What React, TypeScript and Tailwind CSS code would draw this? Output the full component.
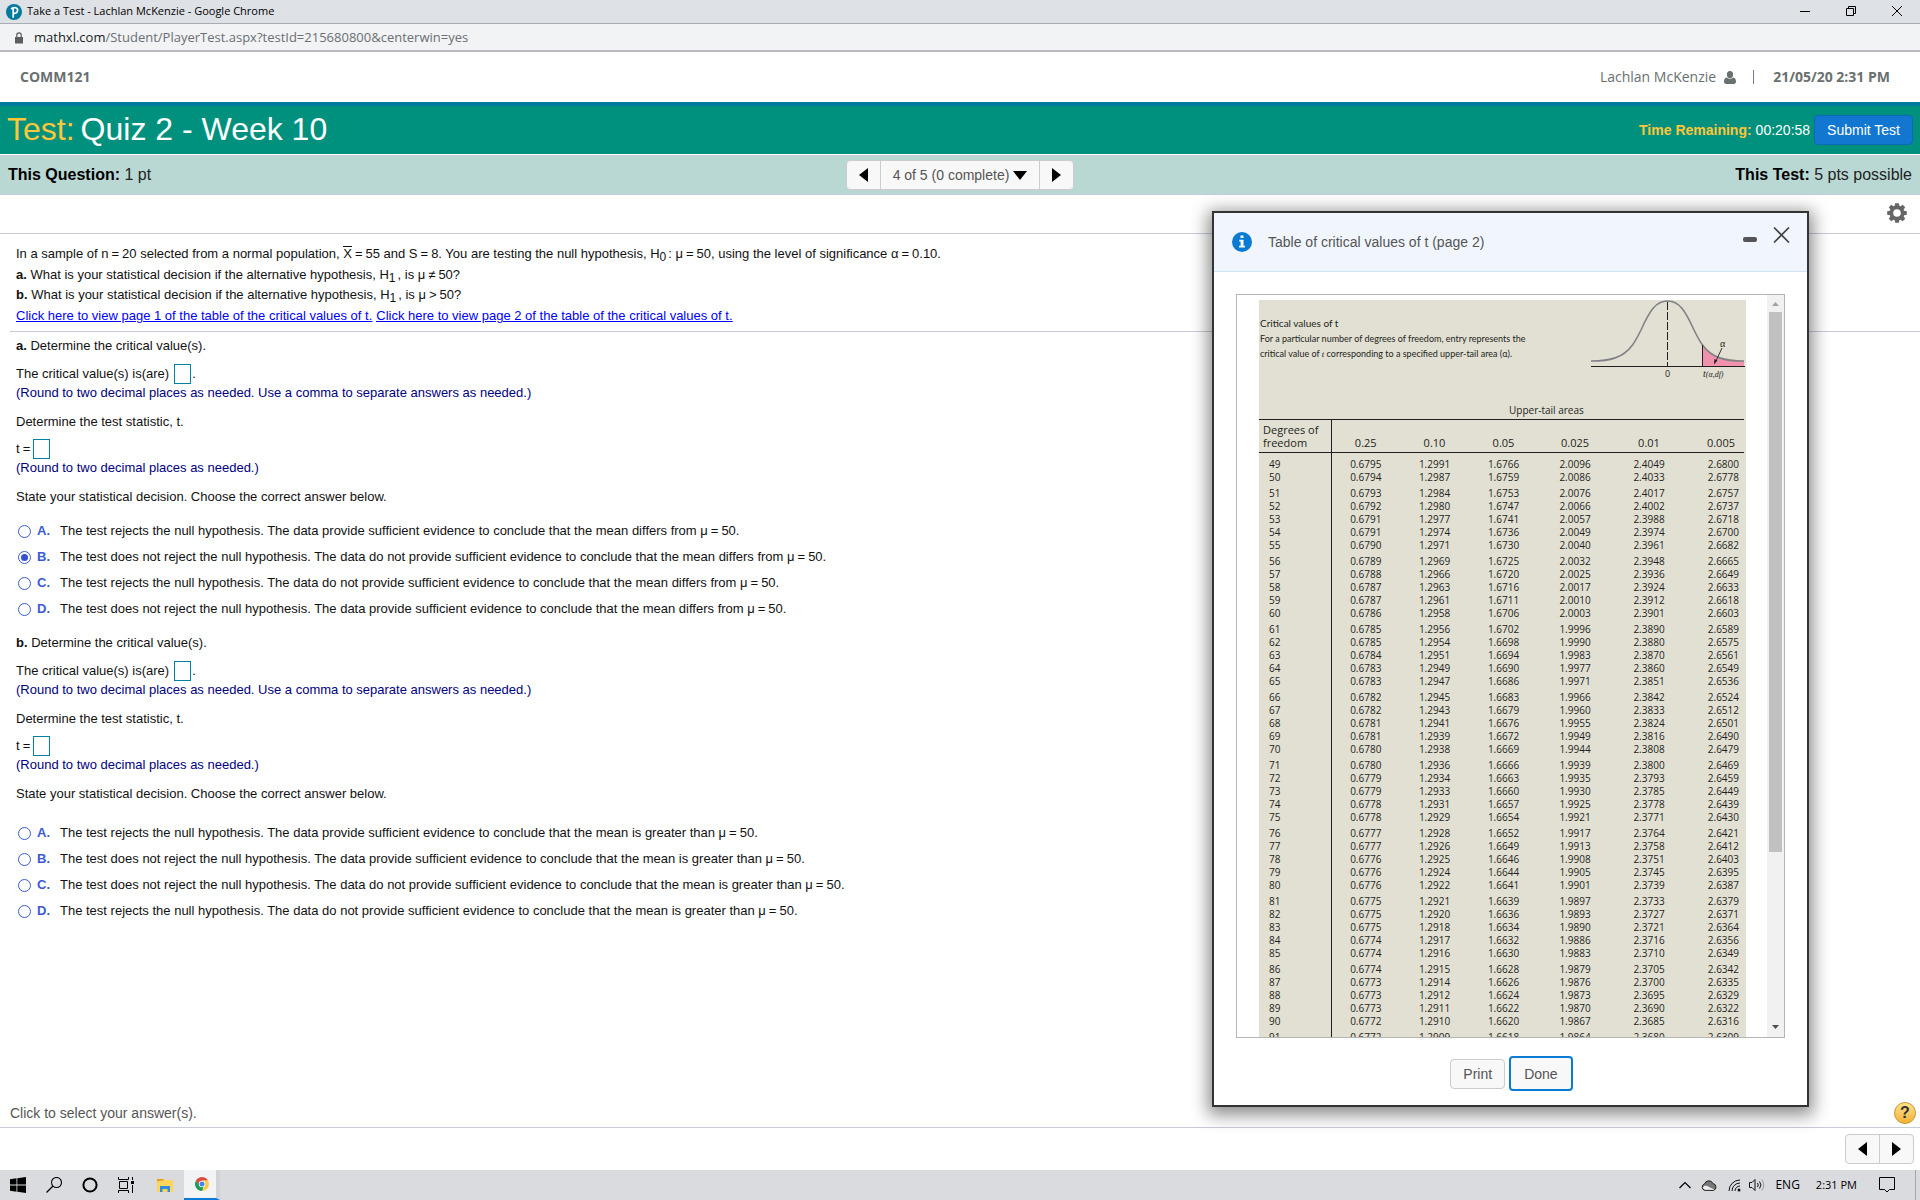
import React, { useState } from "react";

const CRITICAL_VALUES: string[][] = `
49 0.6795 1.2991 1.6766 2.0096 2.4049 2.6800
50 0.6794 1.2987 1.6759 2.0086 2.4033 2.6778
51 0.6793 1.2984 1.6753 2.0076 2.4017 2.6757
52 0.6792 1.2980 1.6747 2.0066 2.4002 2.6737
53 0.6791 1.2977 1.6741 2.0057 2.3988 2.6718
54 0.6791 1.2974 1.6736 2.0049 2.3974 2.6700
55 0.6790 1.2971 1.6730 2.0040 2.3961 2.6682
56 0.6789 1.2969 1.6725 2.0032 2.3948 2.6665
57 0.6788 1.2966 1.6720 2.0025 2.3936 2.6649
58 0.6787 1.2963 1.6716 2.0017 2.3924 2.6633
59 0.6787 1.2961 1.6711 2.0010 2.3912 2.6618
60 0.6786 1.2958 1.6706 2.0003 2.3901 2.6603
61 0.6785 1.2956 1.6702 1.9996 2.3890 2.6589
62 0.6785 1.2954 1.6698 1.9990 2.3880 2.6575
63 0.6784 1.2951 1.6694 1.9983 2.3870 2.6561
64 0.6783 1.2949 1.6690 1.9977 2.3860 2.6549
65 0.6783 1.2947 1.6686 1.9971 2.3851 2.6536
66 0.6782 1.2945 1.6683 1.9966 2.3842 2.6524
67 0.6782 1.2943 1.6679 1.9960 2.3833 2.6512
68 0.6781 1.2941 1.6676 1.9955 2.3824 2.6501
69 0.6781 1.2939 1.6672 1.9949 2.3816 2.6490
70 0.6780 1.2938 1.6669 1.9944 2.3808 2.6479
71 0.6780 1.2936 1.6666 1.9939 2.3800 2.6469
72 0.6779 1.2934 1.6663 1.9935 2.3793 2.6459
73 0.6779 1.2933 1.6660 1.9930 2.3785 2.6449
74 0.6778 1.2931 1.6657 1.9925 2.3778 2.6439
75 0.6778 1.2929 1.6654 1.9921 2.3771 2.6430
76 0.6777 1.2928 1.6652 1.9917 2.3764 2.6421
77 0.6777 1.2926 1.6649 1.9913 2.3758 2.6412
78 0.6776 1.2925 1.6646 1.9908 2.3751 2.6403
79 0.6776 1.2924 1.6644 1.9905 2.3745 2.6395
80 0.6776 1.2922 1.6641 1.9901 2.3739 2.6387
81 0.6775 1.2921 1.6639 1.9897 2.3733 2.6379
82 0.6775 1.2920 1.6636 1.9893 2.3727 2.6371
83 0.6775 1.2918 1.6634 1.9890 2.3721 2.6364
84 0.6774 1.2917 1.6632 1.9886 2.3716 2.6356
85 0.6774 1.2916 1.6630 1.9883 2.3710 2.6349
86 0.6774 1.2915 1.6628 1.9879 2.3705 2.6342
87 0.6773 1.2914 1.6626 1.9876 2.3700 2.6335
88 0.6773 1.2912 1.6624 1.9873 2.3695 2.6329
89 0.6773 1.2911 1.6622 1.9870 2.3690 2.6322
90 0.6772 1.2910 1.6620 1.9867 2.3685 2.6316
91 0.6772 1.2909 1.6618 1.9864 2.3680 2.6309`
  .trim()
  .split("\n")
  .map((line) => line.split(" "));

const UPPER_TAIL = ["0.25", "0.10", "0.05", "0.025", "0.01", "0.005"];

function Eq({ sign = "=" }: { sign?: string }) {
  return <span className="mx-[3px]">{sign}</span>;
}

function Sub({ children }: { children: React.ReactNode }) {
  return <sub className="mr-0.5 text-xs leading-none">{children}</sub>;
}

function Triangle({ dir }: { dir: "left" | "right" | "down" }) {
  const points = { left: "9,0 9,14 0,7", right: "0,0 0,14 9,7", down: "0,3 14,3 7,12" }[dir];
  return (
    <svg className={dir === "down" ? "h-3.5 w-3.5" : "h-3.5 w-[9px]"} aria-hidden="true">
      <polygon points={points} fill="#000" />
    </svg>
  );
}

function WindowChrome() {
  return (
    <>
      <div className="flex h-6 items-center justify-between border-b border-[#a9acb0] bg-[#dee1e6] pl-1.5 font-['Open_Sans',sans-serif] text-[11px] text-black">
        <div className="flex items-center gap-[5px]">
          <svg viewBox="0 0 16 16" className="h-4 w-4" aria-hidden="true">
            <circle cx="8" cy="8" r="8" fill="#047a9c" />
            <path d="M5.6 4.6C8 2.6 12 3.6 11.6 6.6 11.3 9 9 9.8 7.4 9.2M7.2 5.4v7.6" fill="none" stroke="#fff" strokeWidth="1.7" strokeLinecap="round" />
          </svg>
          <span>Take a Test - Lachlan McKenzie - Google Chrome</span>
        </div>
        <div className="flex pb-0.5">
          <button aria-label="Minimize" className="flex h-5 w-[46px] items-center justify-center">
            <svg className="h-3 w-3"><path d="M1 6.5h10" stroke="#000" /></svg>
          </button>
          <button aria-label="Restore" className="flex h-5 w-[46px] items-center justify-center">
            <svg className="h-3 w-3"><path d="M1.5 3.5h7v7h-7zM3.5 3.5v-2h7v7h-2" fill="none" stroke="#000" /></svg>
          </button>
          <button aria-label="Close" className="flex h-5 w-[46px] items-center justify-center">
            <svg className="h-3 w-3"><path d="M1 1l10 10M11 1L1 11" stroke="#000" /></svg>
          </button>
        </div>
      </div>
      <div className="flex h-7 items-center gap-2.5 border-b-2 border-[#b8babd] bg-[#f1f3f4] pt-px pl-3.5 font-['Open_Sans',sans-serif] text-[13px] text-[#6b6f74]">
        <svg viewBox="0 0 10 12" className="h-3 w-2.5" aria-label="Secure">
          <path d="M1 5h8v6.5H1z" fill="#5a5d61" />
          <path d="M2.8 5V3a2.2 2.2 0 0 1 4.4 0v2" fill="none" stroke="#5a5d61" strokeWidth="1.2" />
        </svg>
        <span>
          <span className="text-[#202124]">mathxl.com</span>/Student/PlayerTest.aspx?testId=215680800&amp;centerwin=yes
        </span>
      </div>
    </>
  );
}

function CourseHeader() {
  return (
    <header>
      <div className="flex h-[50px] items-center justify-between px-5 font-['Open_Sans',sans-serif] text-sm text-[#6a7070]">
        <span className="font-bold">COMM121</span>
        <div className="mr-2.5 flex items-center">
          <span>Lachlan McKenzie</span>
          <svg viewBox="0 0 12 13" className="ml-2 h-[13px] w-3" aria-hidden="true">
            <ellipse cx="6" cy="3.6" rx="3.1" ry="3.6" fill="#6a7070" />
            <path d="M0 10.5C0 7.8 1.4 6.6 2.8 6.4 4.4 8.2 7.6 8.2 9.2 6.4 10.6 6.6 12 7.8 12 10.5 12 12 11.2 13 9.8 13H2.2C.8 13 0 12 0 10.5z" fill="#6a7070" />
          </svg>
          <span className="ml-[17px] h-3.5 w-px bg-[#7a7896]" />
          <span className="ml-[19px] font-bold">21/05/20 2:31 PM</span>
        </div>
      </div>
      <div className="flex h-[52px] items-center justify-between border-t-4 border-[#007a9c] bg-[#00917e] pr-[7px] pl-[7px] text-white">
        <h1 className="flex gap-1.5 pb-0.5 text-[32px] leading-none">
          <span className="text-[#ffc639]">Test:</span>
          <span>Quiz 2 - Week 10</span>
        </h1>
        <div className="flex items-center text-sm">
          <span className="mr-1 font-bold text-[#ffc639]">Time Remaining:</span>
          <span className="mr-1">00:20:58</span>
          <button className="h-[30px] rounded-sm border border-[#0e68b8] bg-[#1177d1] px-3">Submit Test</button>
        </div>
      </div>
      <div className="mt-px grid h-10 grid-cols-3 items-center border-y border-[#c8ccda] bg-[#bad8d3] px-2 text-base text-[#222]">
        <div>
          <b className="text-black">This Question:</b> 1 pt
        </div>
        <div className="flex h-[30px] items-stretch justify-self-center rounded-sm border border-[#ccc] bg-[#f8f8f8] text-sm text-[#555]">
          <button aria-label="Previous question" className="flex w-[33px] items-center justify-center"><Triangle dir="left" /></button>
          <button className="flex items-center gap-1 border-x border-[#ccc] px-3">4 of 5 (0 complete) <Triangle dir="down" /></button>
          <button aria-label="Next question" className="flex w-[33px] items-center justify-center"><Triangle dir="right" /></button>
        </div>
        <div className="justify-self-end">
          <b className="text-black">This Test:</b> 5 pts possible
        </div>
      </div>
      <div className="flex h-[39px] items-center justify-end border-b border-[#c8ccda] pr-[13px] pb-0.5">
        <button aria-label="Settings">
          <svg viewBox="-10 -10 20 20" className="h-5 w-5" aria-hidden="true">
            {[0, 45, 90, 135, 180, 225, 270, 315].map((a) => (
              <path key={a} d="M-2.6-6L-1.8-9.8H1.8L2.6-6z" fill="#666" transform={`rotate(${a})`} />
            ))}
            <circle r="5.6" fill="none" stroke="#666" strokeWidth="3.6" />
          </svg>
        </button>
      </div>
    </header>
  );
}

function AnswerBox({ label }: { label: string }) {
  return <input aria-label={label} className="h-5 w-[17px] border border-[#0082a0] bg-white text-center outline-none" />;
}

function Part({ id, intro, lead, choices, initial, gap }: {
  id: string;
  intro: string;
  lead: string;
  choices: string[];
  initial: string;
  gap: string;
}) {
  const [picked, setPicked] = useState(initial);
  return (
    <section className="flex flex-col">
      <p className="leading-5"><b>{id}.</b> {intro}</p>
      <p className="mt-2 flex h-5 items-center">
        <span className="mr-[5px]">The critical value(s) is(are)</span>
        <AnswerBox label={`Critical values, part ${id}`} />
        <span className="ml-px">.</span>
      </p>
      <p className="leading-[18px] text-[#000080]">(Round to two decimal places as needed. Use a comma to separate answers as needed.)</p>
      <p className="mt-2.5 leading-5">Determine the test statistic, t.</p>
      <p className="mt-[7px] flex h-5 items-center">
        <span>t<Eq /></span>
        <AnswerBox label={`Test statistic, part ${id}`} />
      </p>
      <p className="leading-[18px] text-[#000080]">(Round to two decimal places as needed.)</p>
      <p className="mt-2.5 leading-5">State your statistical decision. Choose the correct answer below.</p>
      <div className={gap}>
        {choices.map((text, i) => {
          const letter = "ABCD"[i];
          return (
            <label key={letter} className="flex h-[26px] items-center">
              <input
                type="radio"
                name={`part-${id}`}
                checked={picked === letter}
                onChange={() => setPicked(letter)}
                className="ml-0.5 grid h-[13px] w-[13px] appearance-none place-items-center rounded-full border border-[#3b5bd0] bg-white before:h-[7px] before:w-[7px] before:rounded-full checked:before:bg-[#3450cf]"
              />
              <span className="ml-1.5 w-[23px] font-bold text-[#3b5bd6]">{letter}.</span>
              <span>The test {text} {lead} μ<Eq />50.</span>
            </label>
          );
        })}
      </div>
    </section>
  );
}

function Question() {
  return (
    <main className="flex-1 text-[13px] text-[#111]">
      <div className="px-4 pt-[9px] leading-[21px]">
        <p className="h-[21px]">
          In a sample of n<Eq />20 selected from a normal population,{" "}
          <span className="inline-block border-t border-[#111] leading-[13px]">X</span><Eq />55 and S<Eq />8. You are testing the null hypothesis,
          H<Sub>0</Sub>: μ<Eq />50, using the level of significance α<Eq />0.10.
        </p>
        <p className="h-5"><b>a.</b> What is your statistical decision if the alternative hypothesis, H<Sub>1</Sub>, is μ<Eq sign="≠" />50?</p>
        <p className="h-[21px]"><b>b.</b> What is your statistical decision if the alternative hypothesis, H<Sub>1</Sub>, is μ<Eq sign=">" />50?</p>
        <p className="h-[21px] text-[#0000ff] underline">
          <a href="#table-1">Click here to view page 1 of the table of the critical values of t.</a>
          <span className="inline-block w-1" />
          <a href="#table-2">Click here to view page 2 of the table of the critical values of t.</a>
        </p>
      </div>
      <hr className="mt-[5px] ml-2.5 border-[#c8ccda]" />
      <div className="flex flex-col gap-[11px] px-4 pt-1">
        <Part
          id="a"
          intro="Determine the critical value(s)."
          lead="sufficient evidence to conclude that the mean differs from"
          initial="B"
          gap="mt-[11px]"
          choices={[
            "rejects the null hypothesis. The data provide",
            "does not reject the null hypothesis. The data do not provide",
            "rejects the null hypothesis. The data do not provide",
            "does not reject the null hypothesis. The data provide",
          ]}
        />
        <Part
          id="b"
          intro="Determine the critical value(s)."
          lead="sufficient evidence to conclude that the mean is greater than"
          initial=""
          gap="mt-4"
          choices={[
            "rejects the null hypothesis. The data provide",
            "does not reject the null hypothesis. The data provide",
            "does not reject the null hypothesis. The data do not provide",
            "rejects the null hypothesis. The data do not provide",
          ]}
        />
      </div>
    </main>
  );
}

function BellCurve() {
  return (
    <svg viewBox="0 0 154 82" className="mr-px h-[82px] w-[154px]" fontFamily="Open Sans, sans-serif" fill="#231f20">
      <path d="M111.5 45C121 58 134 61 153 61V66H111.5z" fill="#f092ae" />
      <path d="M0 61C19 61 32 58 41.5 45 44.5 41 47 36 50 30 59 10 65 1 76.500 1S94 10 103 30C106 36 108.500 41 111.500 45 121 58 134 61 153 61" fill="none" stroke="#808285" strokeWidth="1.6" />
      <path d="M0 66.500h154M111.500 45v21" stroke="#231f20" />
      <path d="M76.500 2v64" stroke="#231f20" strokeDasharray="8 2" />
      <path d="M131 48l-6.500 14" stroke="#231f20" strokeWidth="0.9" />
      <path d="M123 64.500l.4-5.500 3 1.400z" />
      <text x="129" y="47" fontSize="10" fontFamily="Liberation Serif, serif">α</text>
      <text x="74" y="77" fontSize="9">0</text>
      <text x="112" y="77" fontSize="10" fontFamily="Liberation Serif, serif" fontStyle="italic">t<tspan fontSize="8">(α,df)</tspan></text>
    </svg>
  );
}

function CriticalValuesTable() {
  return (
    <table className="w-[485px] table-fixed border-collapse text-[10px] leading-[13px]">
      <colgroup>
        <col className="w-[72px]" />
        <col className="w-[69px]" />
        <col className="w-[69px]" />
        <col className="w-[69px]" />
        <col className="w-[74px]" />
        <col className="w-[74px]" />
        <col className="w-[58px]" />
      </colgroup>
      <thead>
        <tr className="h-[33px] border-y border-[#231f20] align-bottom text-[11px]">
          <th scope="col" className="border-r border-[#231f20] pb-[3px] pl-1 text-left font-normal">Degrees of<br />freedom</th>
          {UPPER_TAIL.map((h, i) => (
            <th key={h} scope="col" className={i === 5 ? "pr-[9px] pb-[3px] text-right font-normal" : "pb-[3px] font-normal"}>{h}</th>
          ))}
        </tr>
      </thead>
      <tbody>
        {CRITICAL_VALUES.map((row, r) => {
          const first = r === 0;
          const gap = r > 0 && Number(row[0]) % 5 === 1;
          const pad = first ? "pt-[5px]" : gap ? "pt-[3px]" : "pt-0";
          return (
            <tr key={row[0]}>
              <th scope="row" className={`border-r border-[#231f20] pl-2.5 text-left font-normal ${pad}`}>{row[0]}</th>
              {row.slice(1).map((v, i) => (
                <td key={i} className={`${i === 5 ? "pr-[5px] text-right" : "text-center"} ${pad}`}>{v}</td>
              ))}
            </tr>
          );
        })}
      </tbody>
    </table>
  );
}

function TableDialog() {
  return (
    <div role="dialog" aria-label="Table of critical values of t (page 2)" className="absolute top-[211px] right-[111px] bottom-[93px] flex w-[597px] flex-col border-2 border-[#333] bg-white shadow-[0_4px_16px_4px_rgba(0,0,0,0.45)]">
      <div className="flex h-[59px] items-center border-b border-[#cde3f7] bg-[#f1f6fe] pl-[18px] text-sm text-[#555]">
        <svg viewBox="0 0 20 20" className="mr-4 h-5 w-5" aria-hidden="true">
          <circle cx="10" cy="10" r="10" fill="#0a7bd4" />
          <path d="M8.500 3.500h3v2.600h-3zM7.300 7.800h4.200v5.900h1.400v1.800H7.100v-1.800h1.500V9.600H7.300z" fill="#fff" />
        </svg>
        <span>Table of critical values of t (page 2)</span>
        <div className="mr-[17px] mb-3.5 ml-auto flex items-end gap-4">
          <button aria-label="Minimize dialog" className="mb-px h-[5px] w-3.5 rounded-xs bg-[#555]" />
          <button aria-label="Close dialog">
            <svg viewBox="0 0 17 16" className="h-4 w-[17px]"><path d="M1 .5l15 15M16 .5l-15 15" stroke="#444" strokeWidth="1.7" /></svg>
          </button>
        </div>
      </div>
      <div className="mx-[22px] mt-[22px] flex min-h-0 flex-1 overflow-hidden border border-[#b5b5b5]">
        <div className="mt-[5px] ml-[22px] w-[487px] self-start bg-[#e2dfd3] font-['Open_Sans',sans-serif] text-[#231f20]">
          <div className="flex justify-between">
            <div className="pt-[15px] pl-px font-['Lato',sans-serif] text-[9px] leading-[15px]">
              <p className="text-[10px] leading-4">Critical values of t</p>
              <p>For a particular number of degrees of freedom, entry represents the</p>
              <p>critical value of <i className="font-['Liberation_Serif',serif]">t</i> corresponding to a specified upper-tail area (α).</p>
            </div>
            <BellCurve />
          </div>
          <p className="mt-[21px] mb-px pl-[250px] text-[10px] leading-[15px]">Upper-tail areas</p>
          <CriticalValuesTable />
        </div>
        <div className="ml-auto flex w-[17px] flex-col items-center justify-between bg-[#f1f1f1]" aria-hidden="true">
          <svg className="h-[17px] w-[17px] shrink-0"><path d="M5 11h7L8.500 7z" fill="#a3a3a3" /></svg>
          <div className="h-[540px] w-[13px] bg-[#c1c1c1]" />
          <div className="min-h-0 flex-1" />
          <svg className="h-[17px] w-[17px] shrink-0"><path d="M5 5h7l-3.500 4z" fill="#505050" /></svg>
        </div>
      </div>
      <div className="mt-[18px] mb-[14px] flex items-center justify-center gap-1 pl-0.5 text-sm text-[#555]">
        <button className="h-[30px] rounded-sm border border-[#ccc] bg-[#f8f8f8] px-3">Print</button>
        <button className="h-[35px] rounded border-2 border-[#0a7bd4] bg-[#f8f8f8] px-[13px]">Done</button>
      </div>
    </div>
  );
}

function Footer() {
  return (
    <footer>
      <div className="flex h-[29px] items-center justify-between border-b border-[#c8ccda] pr-1 pl-2.5 text-sm text-[#555]">
        <span>Click to select your answer(s).</span>
        <button aria-label="Help" className="h-[22px] w-[22px] rounded-full border border-[#c9962f] bg-linear-to-b from-[#fde28a] to-[#f3b233] text-base leading-none font-bold text-[#333]">?</button>
      </div>
      <div className="flex h-[42px] items-center justify-end pr-1.5">
        <div className="flex h-[30px] rounded-sm border border-[#ccc] bg-[#f8f8f8]">
          <button aria-label="Previous question" className="flex w-[34px] items-center justify-center border-r border-[#ccc]"><Triangle dir="left" /></button>
          <button aria-label="Next question" className="flex w-[33px] items-center justify-center"><Triangle dir="right" /></button>
        </div>
      </div>
    </footer>
  );
}

function Taskbar() {
  return (
    <nav aria-label="Taskbar" className="flex h-[30px] items-stretch justify-between bg-[#d9dbdf] font-['Open_Sans',sans-serif] text-[11px] text-black">
      <div className="flex">
        <button aria-label="Start" className="flex w-9 items-center justify-center">
          <svg viewBox="0 0 16 16" className="h-4 w-4"><path d="M0 2.200L6.500 1.300V7.600H0zM7.300 1.200L16 0V7.600H7.300zM0 8.400H6.500V14.700L0 13.800zM7.300 8.400H16V16L7.300 14.800z" /></svg>
        </button>
        <button aria-label="Search" className="flex w-9 items-center justify-center">
          <svg viewBox="0 0 16 16" className="h-4 w-4"><circle cx="10.500" cy="5.500" r="5" fill="none" stroke="#000" strokeWidth="1.100" /><path d="M7 9L.5 15.500" stroke="#000" strokeWidth="1.300" /></svg>
        </button>
        <button aria-label="Cortana" className="flex w-9 items-center justify-center">
          <svg viewBox="0 0 16 16" className="h-4 w-4"><circle cx="8" cy="8" r="6.600" fill="none" stroke="#000" strokeWidth="2" /></svg>
        </button>
        <button aria-label="Task view" className="flex w-9 items-center justify-center">
          <svg viewBox="0 0 16 16" className="h-4 w-4" fill="none" stroke="#000"><path d="M.5 0v2.500h10V0M1.500 4.500h8v7h-8zM.5 16v-2.500h10V16M14.500 0v3M14.500 8v8" /><path d="M13 4h3v3h-3z" fill="#000" stroke="none" /></svg>
        </button>
        <button aria-label="File Explorer" className="flex w-10 items-center justify-center pl-0.5">
          <svg viewBox="0 0 16 15" className="h-[15px] w-4"><path d="M0 1h7v3H0z" fill="#e5a018" /><path d="M0 3.500l8-1.500h8v12H0z" fill="#fdd45c" /><path d="M3 14V8h10v6h-2.500v-3h-5v3z" fill="#2f8be0" /></svg>
        </button>
        <button aria-label="Google Chrome" className="flex w-9 items-center justify-center border-r-4 border-b-2 border-r-[#d0d4d8] border-b-[#0a78d6] bg-[#f1f3f5] pl-1">
          <svg viewBox="-7 -7 14 14" className="h-3.5 w-3.5">
            <path d="M-6.060-3.500A7 7 0 0 1 6.060-3.500L0-3.200-3 1.500z" fill="#dd4b3e" />
            <path d="M6.060-3.500A7 7 0 0 1 0 7L3 1.500 0-3.500z" fill="#fdcd45" />
            <path d="M0 7A7 7 0 0 1-6.060-3.500L-2.800 1.600 1.500 3z" fill="#1a9b57" />
            <circle r="3.200" fill="#fff" /><circle r="2.500" fill="#4285f4" />
          </svg>
        </button>
      </div>
      <div className="flex items-center">
        <svg viewBox="0 0 12 8" className="mr-2.5 h-2 w-3"><path d="M.5 7L6 1.500 11.500 7" fill="none" stroke="#000" strokeWidth="1.200" /></svg>
        <svg viewBox="0 0 16 11" className="mr-[11px] h-[11px] w-4"><path d="M4 10.400A3.300 3.300 0 0 1 3.500 4 4.500 4.500 0 0 1 12 3.600 3.500 3.500 0 0 1 12.500 10.400z" fill="#777" /><path d="M1.500 8C3 5 6 5.500 8 7L13.500 9.500 12.500 10.400H4z" fill="#eee" /><path d="M4 10.400A3.300 3.300 0 0 1 3.500 4 4.500 4.500 0 0 1 12 3.600 3.500 3.500 0 0 1 12.500 10.400z" fill="none" stroke="#222" /></svg>
        <svg viewBox="0 0 13 13" className="mr-2 h-[13px] w-[13px]" fill="none" stroke="#111"><path d="M1 12A11 11 0 0 1 12 1M4 12a8 8 0 0 1 8-8M7 12a5 5 0 0 1 5-5" /><circle cx="11" cy="11" r="1.500" fill="#111" stroke="none" /></svg>
        <svg viewBox="0 0 16 14" className="mr-2.5 h-3.5 w-4" fill="none" stroke="#111"><path d="M.5 4.500H3L6 1.500v11L3 9.500H.500z" /><path d="M8.500 5q1.500 2 0 4M10.500 3.500q3 3.500 0 7" /><path d="M12.800 1.500q4 5.500 0 11" stroke="#999" /></svg>
        <span className="mr-4 text-[12px]">ENG</span>
        <span className="mr-[22px]">2:31 PM</span>
        <svg viewBox="0 0 16 16" className="mr-5 h-4 w-4"><path d="M.5 .5h15v12h-5L8 15l-2.500-2.500h-5z" fill="none" stroke="#000" /></svg>
        <div className="h-full w-[5px] border-l border-[#a5a7aa]" />
      </div>
    </nav>
  );
}

export default function App() {
  return (
    <div className="relative flex min-h-screen flex-col bg-white font-['Liberation_Sans',Arial,sans-serif]">
      <WindowChrome />
      <CourseHeader />
      <Question />
      <Footer />
      <Taskbar />
      <TableDialog />
    </div>
  );
}
